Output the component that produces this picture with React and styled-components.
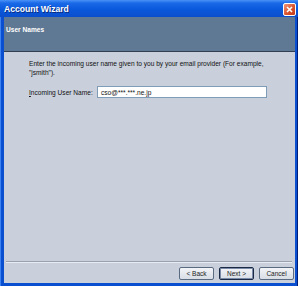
import React from "react"
import styled, { createGlobalStyle } from "styled-components"

const Global = createGlobalStyle`
  html, body { margin: 0; padding: 0; background: #c9d0dc; }
  body { font-family: "Liberation Sans", Arial, sans-serif; }
`

const Window = styled.div`
  width: 298px;
  height: 286px;
  box-sizing: border-box;
  display: flex;
  flex-direction: column;
  background: #0a4fd0;
  padding: 0 2px 3px 3px;
  border-left: 1px solid #3d82f2;
  border-right: 1px solid #001e78;
`

const TitleBar = styled.div`
  height: 17px;
  display: flex;
  align-items: center;
  justify-content: space-between;
  margin: 0 -3px 0 -4px;
  padding: 1px 2px 0 4px;
  box-sizing: border-box;
  background: linear-gradient(#4a92f8 0%, #1a6ae8 18%, #0a58dc 55%, #0a4ecc 100%);
  color: #fff;
  font-weight: bold;
  font-size: 8.6px;
  text-shadow: 1px 1px 0 #0a2c80;
`

const CloseBtn = styled.div`
  width: 13px;
  height: 13px;
  box-sizing: border-box;
  border: 1px solid #fff;
  border-radius: 2px;
  background: linear-gradient(135deg, #f0957a, #d8502a 60%, #c03c18);
  display: flex;
  align-items: center;
  justify-content: center;
`

const Header = styled.div`
  height: 35px;
  background: #5f7893;
  border-bottom: 1px solid #2f3e52;
  padding: 9px 2px 0;
  box-sizing: border-box;
  color: #fff;
  font-weight: bold;
  font-size: 6.6px;
`

const Body = styled.div`
  flex: 1;
  background: #c9d0dc;
  display: flex;
  flex-direction: column;
  padding: 7px 0 0;
`

const Content = styled.div`
  flex: 1;
  padding: 0 0 0 25px;
  font-size: 6.6px;
  color: #111;
`

const Para = styled.p`
  margin: 0;
  line-height: 9px;
  width: 240px;
`

const Row = styled.div`
  display: flex;
  align-items: center;
  margin-top: 9px;
`

const Label = styled.span`
  width: 68px;
`

const Input = styled.div`
  width: 170px;
  height: 12px;
  box-sizing: border-box;
  background: #fff;
  border: 1px solid #7f9db9;
  padding: 1px 3px 0;
  line-height: 10px;
`

const Separator = styled.div`
  height: 0;
  margin: 0 3px 0 2px;
  border-top: 1px solid #9aa2ae;
  border-bottom: 1px solid #e8ecf2;
`

const Footer = styled.div`
  display: flex;
  justify-content: flex-end;
  gap: 5px;
  padding: 4px 1px 3px;
`

const Button = styled.div`
  width: 35px;
  height: 13px;
  box-sizing: border-box;
  border: 1px solid ${p => (p.$default ? "#1a2a44" : "#5a6a80")};
  box-shadow: ${p => (p.$default ? "inset 0 0 0 1px #7a8aa8" : "none")};
  border-radius: 2px;
  background: linear-gradient(#f2f4f7, #d8dde5);
  font-size: 6.5px;
  color: #222;
  display: flex;
  align-items: center;
  justify-content: center;
`

export default function App() {
  return (
    <>
      <Global />
      <Window>
        <TitleBar>
          <span>Account Wizard</span>
          <CloseBtn>
            <svg width="7" height="7" viewBox="0 0 7 7">
              <path d="M1 1 L6 6 M6 1 L1 6" stroke="#fff" strokeWidth="1.6" />
            </svg>
          </CloseBtn>
        </TitleBar>
        <Header>User Names</Header>
        <Body>
          <Content>
            <Para>
              Enter the incoming user name given to you by your email provider (For example,
              "jsmith").
            </Para>
            <Row>
              <Label><u>I</u>ncoming User Name:</Label>
              <Input>cso@***.***.ne.jp</Input>
            </Row>
          </Content>
          <Separator />
          <Footer>
            <Button>&lt; Back</Button>
            <Button $default>Next &gt;</Button>
            <Button>Cancel</Button>
          </Footer>
        </Body>
      </Window>
    </>
  )
}
